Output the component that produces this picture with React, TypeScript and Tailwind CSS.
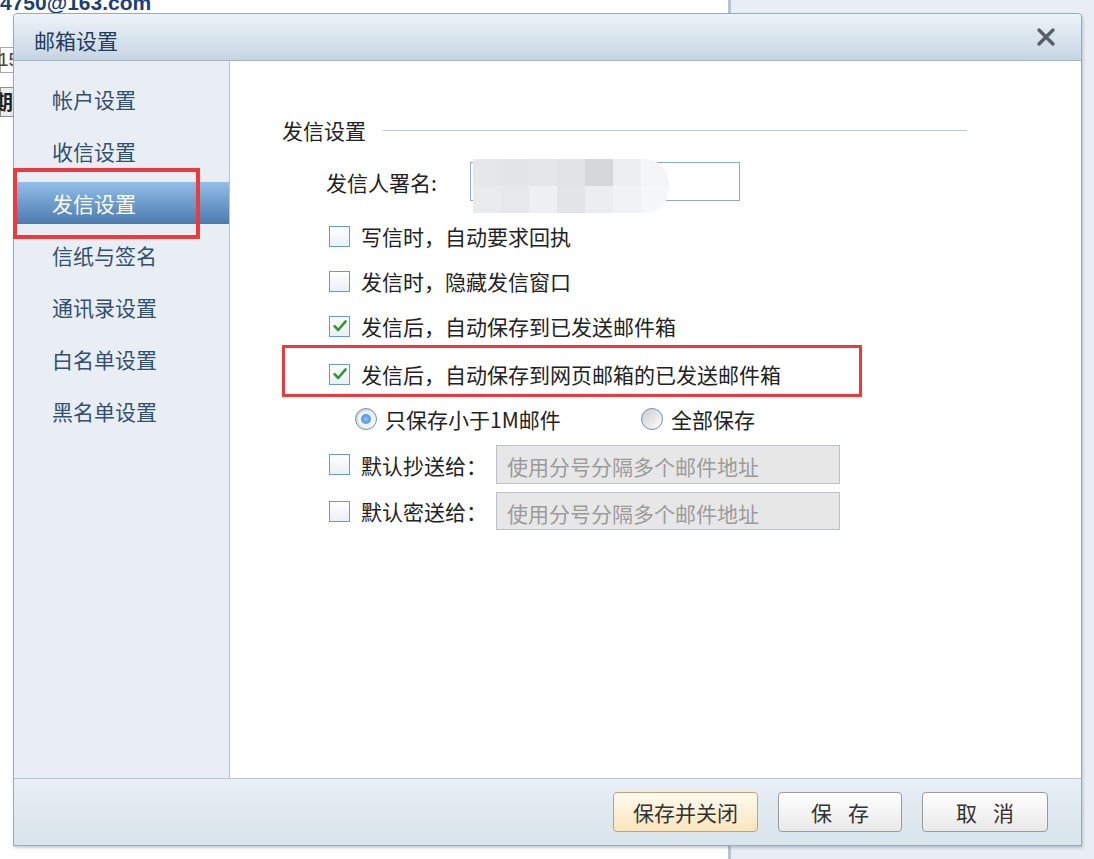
import React from 'react'

const menu = ['帐户设置', '收信设置', '发信设置', '信纸与签名', '通讯录设置', '白名单设置', '黑名单设置']

function Check({ checked }: { checked?: boolean }) {
  return (
    <span className="flex h-[21px] w-[21px] shrink-0 items-center justify-center border border-[#6a9acb] bg-linear-to-b from-white to-[#e9f0f7]">
      {checked && (
        <svg viewBox="0 0 16 16" className="h-[16px] w-[16px]">
          <path d="M2.6 8.2 L6.2 12 L13.6 3.4" fill="none" stroke="#2e9b30" strokeWidth="2.6" strokeLinecap="round" strokeLinejoin="round" />
        </svg>
      )}
    </span>
  )
}

function Radio({ on }: { on?: boolean }) {
  return (
    <span className="flex h-[22px] w-[22px] shrink-0 items-center justify-center rounded-full border border-[#7190b0] bg-linear-to-br from-[#c6ced6] to-white">
      {on ? (
        <span className="flex h-[16px] w-[16px] items-center justify-center rounded-full bg-[#eef4fa]">
          <span className="h-[10px] w-[10px] rounded-full bg-radial from-[#8cc4ff] to-[#2f7fd8]" />
        </span>
      ) : (
        <span className="h-[16px] w-[16px] rounded-full bg-linear-to-br from-[#d0d0d0] to-[#fbfbfb]" />
      )}
    </span>
  )
}

function CheckRow({ label, checked, className }: { label: string; checked?: boolean; className?: string }) {
  return (
    <div className={`flex h-[30px] items-center pl-[47px] ${className ?? ''}`}>
      <Check checked={checked} />
      <span className="ml-[11px]">{label}</span>
    </div>
  )
}

const mosaic = [
  ['#e5e7e9', '#e3e5e7', '#e4e6e8', '#e1e3e5', '#d5d7d9', '#eceef0', '#f3f5f7'],
  ['#e9ebed', '#e6e8ea', '#eef0f2', '#e2e4e6', '#ebedef', '#f0f2f4', '#f5f7f9'],
]

export default function App() {
  return (
    <div className="relative h-[859px] w-[1094px] overflow-hidden bg-white font-['Noto_Sans_CJK_SC',sans-serif] text-[21px] leading-[30px] text-[#222]">
      {/* page behind the dialog */}
      <div className="flex h-full">
        <div className="w-[728px] bg-white">
          <div className="-mt-[9px] font-['Liberation_Sans',sans-serif] text-[21px] font-bold leading-[24px] text-[#1c3f74]">4750@163.com</div>
          <div className="mt-[32px] flex h-[26px] w-[300px] items-center border border-[#a9a9a9] font-['Liberation_Sans',sans-serif] text-[19px] text-[#444]">
            <span className="-ml-[3px]">15</span>
          </div>
          <div className="mt-[14px] flex h-[30px] w-[300px] items-center border border-[#8e8e8e] bg-[#ececec] text-[20px] font-bold text-[#222]">
            <span className="-ml-[8px]">期</span>
          </div>
        </div>
        <div className="w-[3px] bg-[#b3c4d5]" />
        <div className="flex-1 bg-[#e8eef3]" />
      </div>

      {/* dialog */}
      <div className="absolute left-[13px] top-[13px] flex h-[833px] w-[1069px] flex-col rounded-t-[4px] border border-[#97abbf] bg-white shadow-[1px_2px_3px_rgba(90,110,130,0.35)]">
        <div className="flex h-[47px] shrink-0 items-center justify-between rounded-t-[4px] border-b border-[#a3b6c8] bg-linear-to-b from-[#eef3f8] to-[#c6d5e3] pl-[20px] pr-[25px]">
          <span className="pt-[5px] text-[21px] text-[#223c5c]">邮箱设置</span>
          <svg viewBox="0 0 20 20" className="h-[20px] w-[20px]">
            <path d="M3 3 L17 17 M17 3 L3 17" stroke="#5a5f66" strokeWidth="3.4" strokeLinecap="round" />
          </svg>
        </div>

        <div className="flex min-h-0 flex-1">
          <div className="w-[216px] shrink-0 border-r border-[#b5c6d7] bg-[#e8eef3] pt-[17px]">
            {menu.map((m, i) =>
              i === 2 ? (
                <div key={m} className="mb-[10px] ml-[2px] flex h-[42px] items-center bg-linear-to-b from-[#93c0e8] to-[#4b7aae] pl-[36px] text-white">
                  {m}
                </div>
              ) : (
                <div key={m} className="mb-[10px] flex h-[42px] items-center pl-[38px] text-[#33506f]">
                  {m}
                </div>
              )
            )}
          </div>

          <div className="relative flex-1 bg-white pl-[52px] pt-[54px]">
            <div className="flex h-[30px] w-[685px] items-center">
              <span>发信设置</span>
              <span className="ml-[17px] h-px flex-1 bg-[#b4cbe0]" />
            </div>

            <div className="mt-[17px] flex h-[39px] items-center pl-[44px]">
              <span className="w-[144px]">发信人署名:</span>
              <div className="relative h-[39px] w-[270px] border border-[#8fa9c2] bg-white">
                <div className="absolute -top-[4px] left-[2px] flex flex-col overflow-hidden rounded-r-[24px]">
                  {mosaic.map((row, r) => (
                    <div key={r} className="flex">
                      {row.map((c, k) => (
                        <span key={k} className="h-[27px] w-[28px]" style={{ backgroundColor: c }} />
                      ))}
                    </div>
                  ))}
                </div>
              </div>
            </div>

            <CheckRow className="mt-[20px]" label="写信时，自动要求回执" />
            <CheckRow className="mt-[15px]" label="发信时，隐藏发信窗口" />
            <CheckRow className="mt-[15px]" checked label="发信后，自动保存到已发送邮件箱" />
            <CheckRow className="mt-[18px]" checked label="发信后，自动保存到网页邮箱的已发送邮件箱" />

            <div className="mt-[15px] flex h-[30px] items-center pl-[73px]">
              <Radio on />
              <span className="ml-[8px] w-[256px]">只保存小于1M邮件</span>
              <Radio />
              <span className="ml-[8px]">全部保存</span>
            </div>

            <div className="mt-[11px] flex h-[39px] items-center pl-[47px]">
              <Check />
              <span className="ml-[11px] w-[135px]">默认抄送给：</span>
              <input readOnly placeholder="使用分号分隔多个邮件地址" className="h-[39px] w-[344px] border border-[#b7c1cb] bg-[#e7e7e7] px-[10px] pt-[3px] text-[21px] outline-none placeholder:text-[#9b9b9b]" />
            </div>
            <div className="mt-[8px] flex h-[38px] items-center pl-[47px]">
              <Check />
              <span className="ml-[11px] w-[135px]">默认密送给：</span>
              <input readOnly placeholder="使用分号分隔多个邮件地址" className="h-[38px] w-[344px] border border-[#b7c1cb] bg-[#e7e7e7] px-[10px] pt-[3px] text-[21px] outline-none placeholder:text-[#9b9b9b]" />
            </div>

            {/* annotation */}
            <div className="absolute left-[52px] top-[284px] h-[52px] w-[580px] border-[3px] border-[#ec3a3f]" />
          </div>
        </div>

        <div className="flex h-[67px] shrink-0 items-center justify-end gap-[20px] border-t border-[#b6c7d7] bg-linear-to-b from-[#e8eff5] to-[#d9e4ec] pr-[33px]">
          <button className="h-[40px] w-[145px] rounded-[4px] border border-[#c4a273] bg-linear-to-b from-[#fffaf0] to-[#fae5bc] text-[21px] text-[#333]">保存并关闭</button>
          <button className="flex h-[40px] w-[124px] items-center justify-center rounded-[4px] border border-[#9a9a9a] bg-linear-to-b from-white to-[#e9e9e9] text-[21px] text-[#333]">
            <span>保</span>
            <span className="ml-[16px]">存</span>
          </button>
          <button className="flex h-[40px] w-[126px] items-center justify-center rounded-[4px] border border-[#9a9a9a] bg-linear-to-b from-white to-[#e9e9e9] text-[21px] text-[#333]">
            <span>取</span>
            <span className="ml-[16px]">消</span>
          </button>
        </div>

        {/* annotation */}
        <div className="absolute -left-px top-[154px] h-[71px] w-[187px] border-4 border-[#ec3a3f]" />
      </div>
    </div>
  )
}
